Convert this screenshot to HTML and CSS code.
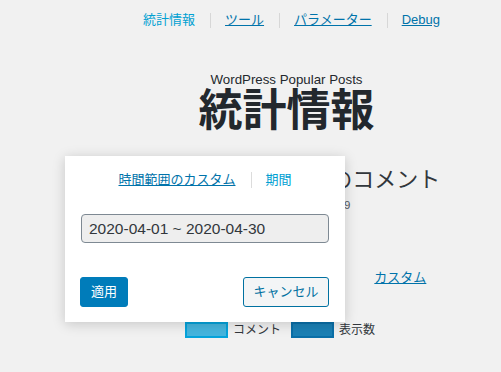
FILE: index.html
```html
<!DOCTYPE html>
<html lang="ja">
<head>
<meta charset="utf-8">
<title>統計情報</title>
<link rel="stylesheet" href="styles.css">
</head>
<body>
<div class="wrap">
  <nav class="nav">
    <a class="nav-link current" href="#">統計情報</a>
    <span class="sep"></span>
    <a class="nav-link" href="#">ツール</a>
    <span class="sep"></span>
    <a class="nav-link" href="#">パラメーター</a>
    <span class="sep"></span>
    <a class="nav-link" href="#">Debug</a>
  </nav>
  <p class="plugin">WordPress Popular Posts</p>
  <h1 class="title">統計情報</h1>
  <h2 class="section">今月の人気記事とそのコメント</h2>
  <p class="range-text">2020/04/01 – 2020/04/29</p>
  <div class="ranges">
    <a href="#">過去7日間</a>
    <a href="#">過去30日間</a>
    <a href="#">カスタム</a>
  </div>
  <div class="legend">
    <span class="swatch swatch-comments"></span><span class="legend-label">コメント</span>
    <span class="swatch swatch-views"></span><span class="legend-label">表示数</span>
  </div>
</div>

<div class="popup">
  <div class="tabs">
    <a class="tab tab-active" href="#">時間範囲のカスタム</a>
    <span class="tab-sep"></span>
    <a class="tab" href="#">期間</a>
  </div>
  <div class="date-input">2020-04-01 ~ 2020-04-30</div>
  <div class="actions">
    <button class="btn btn-primary" type="button">適用</button>
    <button class="btn btn-secondary" type="button">キャンセル</button>
  </div>
</div>
</body>
</html>
```

FILE: styles.css
```css
* { box-sizing: border-box; }

html, body {
  margin: 0;
  padding: 0;
}

body {
  background: #f1f1f1;
  color: #23282d;
  font-family: "Liberation Sans", "Noto Sans CJK JP", sans-serif;
  font-size: 13px;
  width: 501px;
  height: 372px;
  overflow: hidden;
  position: relative;
}

.wrap {
  padding-left: 72px;
  display: flex;
  flex-direction: column;
  align-items: center;
  text-align: center;
}

.nav {
  display: flex;
  align-items: center;
  padding-top: 12px;
  padding-left: 10px;
  height: 28px;
}

.nav-link {
  color: #0073aa;
  text-decoration: underline;
  line-height: 16px;
  font-size: 13px;
}

.nav-link.current {
  color: #00a0d2;
  text-decoration: none;
}

.sep {
  width: 1px;
  height: 15px;
  background: #d7d7d7;
  margin: 0 14px 0 15px;
}

.plugin {
  margin: 44px 0 0;
  line-height: 16px;
  font-size: 13.3px;
  color: #23282d;
}

.title {
  margin: 0;
  font-size: 44px;
  line-height: 46px;
  font-weight: 700;
  color: #23282d;
}

.section {
  margin: 31px 0 0;
  font-size: 22px;
  line-height: 30px;
  font-weight: 400;
  color: #32373c;
}

.range-text {
  margin: 2px 0 0;
  font-size: 11.5px;
  line-height: 16px;
  color: #555d66;
}

.ranges {
  margin-top: 57px;
  display: flex;
  gap: 51px;
  line-height: 16px;
}

.ranges a {
  color: #0073aa;
  text-decoration: underline;
}

.legend {
  margin-top: 36px;
  display: flex;
  align-items: center;
  padding-right: 13px;
  line-height: 16px;
  font-size: 12px;
}

.swatch {
  width: 43px;
  height: 16px;
  border: 2px solid;
  margin-right: 5px;
}

.swatch-comments {
  background: #45b5de;
  border-color: #05a3db;
}

.swatch-views {
  background: #1b80b5;
  border-color: #0a6fa8;
  margin-left: 10px;
}

.legend-label {
  color: #32373c;
}

.popup {
  position: absolute;
  left: 65px;
  top: 156px;
  width: 280px;
  height: 166px;
  background: #fff;
  box-shadow: 0 2px 12px rgba(0, 0, 0, 0.18);
  padding: 16px 16px 15px 15px;
  display: flex;
  flex-direction: column;
}

.tabs {
  display: flex;
  justify-content: center;
  align-items: center;
  height: 16px;
  line-height: 16px;
  padding-left: 1px;
}

.tab {
  color: #00a0d2;
  text-decoration: none;
  font-size: 13px;
}

.tab.tab-active {
  color: #0073aa;
  text-decoration: underline;
}

.tab-sep {
  width: 1px;
  height: 16px;
  background: #dcdcdc;
  margin: 0 14px 0 15px;
}

.date-input {
  margin-top: 26px;
  margin-left: 1px;
  height: 29px;
  border: 1px solid #7e8993;
  border-radius: 4px;
  background: #eeeeee;
  color: #32373c;
  font-size: 15.5px;
  line-height: 27px;
  padding-left: 7px;
  text-align: left;
}

.actions {
  margin-top: auto;
  display: flex;
  justify-content: space-between;
}

.btn {
  height: 30px;
  border-radius: 3px;
  font-family: "Liberation Sans", "Noto Sans CJK JP", sans-serif;
  font-size: 13px;
  line-height: 28px;
  padding: 0;
  border: 1px solid;
  white-space: nowrap;
  text-align: center;
  cursor: pointer;
}

.btn-primary {
  width: 48px;
  background: #007cba;
  border-color: #007cba;
  color: #fff;
}

.btn-secondary {
  width: 86px;
  background: #f3f5f6;
  border-color: #0071a1;
  color: #0071a1;
}
```
